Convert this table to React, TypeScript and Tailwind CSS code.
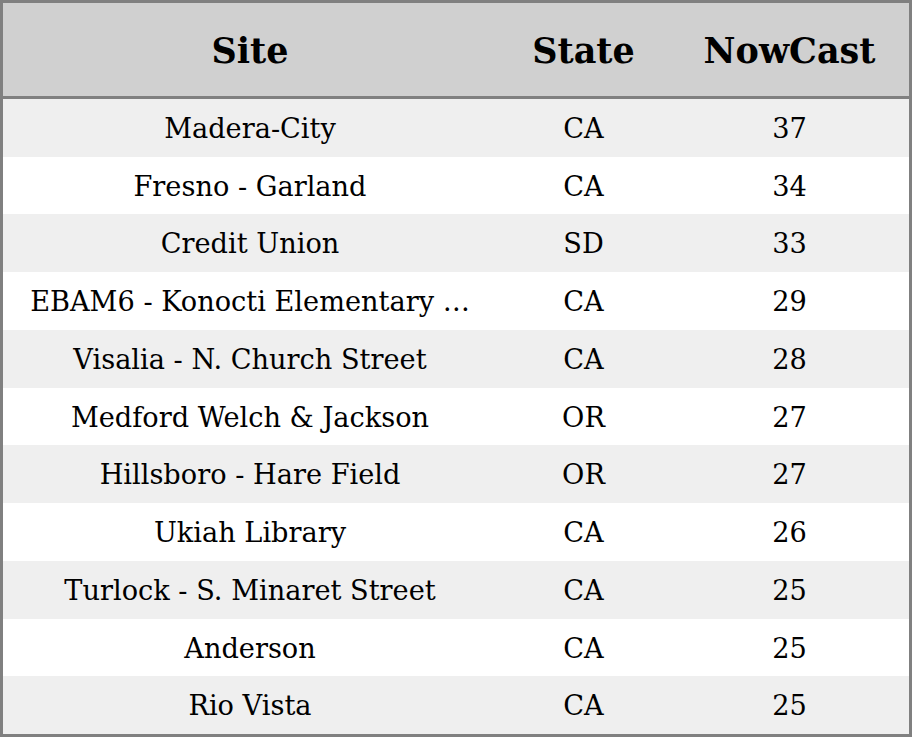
import React from "react";

const rows: [string, string, string][] = [
  ["Madera-City", "CA", "37"],
  ["Fresno - Garland", "CA", "34"],
  ["Credit Union", "SD", "33"],
  ["EBAM6 - Konocti Elementary …", "CA", "29"],
  ["Visalia - N. Church Street", "CA", "28"],
  ["Medford Welch & Jackson", "OR", "27"],
  ["Hillsboro - Hare Field", "OR", "27"],
  ["Ukiah Library", "CA", "26"],
  ["Turlock - S. Minaret Street", "CA", "25"],
  ["Anderson", "CA", "25"],
  ["Rio Vista", "CA", "25"],
];

export default function App() {
  return (
    <div
      className="box-border w-[912px] h-[737px] border-[3px] border-[#808080] flex flex-col text-black bg-white"
      style={{ fontFamily: '"DejaVu Serif", serif' }}
    >
      <div className="h-[96px] shrink-0 pt-[3px] bg-[#d0d0d0] border-b-[3px] border-[#808080] grid grid-cols-[494px_173px_1fr] items-center text-[35px] font-bold">
        <div className="text-center">Site</div>
        <div className="text-center">State</div>
        <div className="text-center">NowCast</div>
      </div>
      {rows.map((r, i) => (
        <div
          key={i}
          className={
            "flex-1 pt-[3px] grid grid-cols-[494px_173px_1fr] items-center text-[27.2px] " +
            (i % 2 === 0 ? "bg-[#efefef]" : "bg-white")
          }
        >
          <div className="text-center whitespace-nowrap">{r[0]}</div>
          <div className="text-center">{r[1]}</div>
          <div className="text-center">{r[2]}</div>
        </div>
      ))}
    </div>
  );
}
